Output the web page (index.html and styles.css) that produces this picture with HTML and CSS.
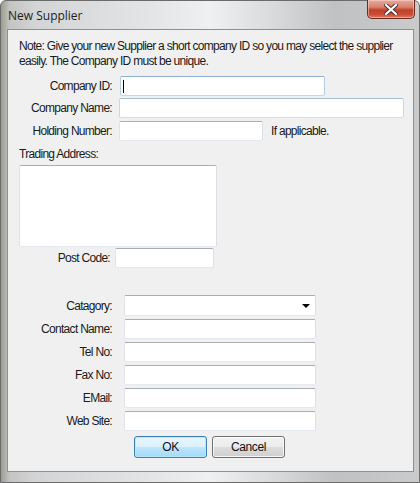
FILE: index.html
```html
<!DOCTYPE html>
<html lang="en">
<head>
  <meta charset="UTF-8" />
  <meta name="viewport" content="width=device-width, initial-scale=1.0" />
  <title>New Supplier</title>
  <link rel="stylesheet" href="styles.css">
</head>
<body>
  <div class="window">
    <div class="titlebar">
      <span class="title">New Supplier</span>
      <button class="close-button" type="button" aria-label="Close">
        <svg width="14" height="11" viewBox="0 0 14 11">
          <path d="M2 1 L12 10 M12 1 L2 10" stroke="#4a2a24" stroke-width="4" stroke-linecap="square" />
          <path d="M2 1 L12 10 M12 1 L2 10" stroke="#ffffff" stroke-width="2.2" stroke-linecap="square" />
        </svg>
      </button>
    </div>

    <form class="client" id="supplierForm">
      <p class="note">
        Note: Give your new Supplier a short company ID so you may select the supplier
        easily. The Company ID must be unique.
      </p>

      <div class="group group-top">
        <div class="row">
          <label class="label" for="company_id">Company ID:</label>
          <div class="caret-wrap">
            <input class="field field-id" type="text" id="company_id" name="company_id" />
            <span class="caret"></span>
          </div>
        </div>
        <div class="row">
          <label class="label" for="company_name">Company Name:</label>
          <input class="field field-name" type="text" id="company_name" name="company_name" />
        </div>
        <div class="row">
          <label class="label" for="holding_number">Holding Number:</label>
          <input class="field field-holding" type="text" id="holding_number" name="holding_number" />
          <span class="hint">If applicable.</span>
        </div>
      </div>

      <div class="address">
        <label class="address-label" for="trading_address">Trading Address:</label>
        <textarea class="field address-box" id="trading_address" name="trading_address"></textarea>
        <div class="row row-post">
          <label class="label" for="post_code">Post Code:</label>
          <input class="field field-post" type="text" id="post_code" name="post_code" />
        </div>
      </div>

      <div class="group group-bottom">
        <div class="row row-select">
          <label class="label">Catagory:</label>
          <div class="field select-box"><span class="arrow"></span></div>
        </div>
        <div class="row">
          <label class="label" for="contact_name">Contact Name:</label>
          <input class="field field-wide" type="text" id="contact_name" name="contact_name" />
        </div>
        <div class="row">
          <label class="label" for="tel_no">Tel No:</label>
          <input class="field field-wide" type="text" id="tel_no" name="tel_no" />
        </div>
        <div class="row">
          <label class="label" for="fax_no">Fax No:</label>
          <input class="field field-wide" type="text" id="fax_no" name="fax_no" />
        </div>
        <div class="row">
          <label class="label" for="email">EMail:</label>
          <input class="field field-wide" type="text" id="email" name="email" />
        </div>
        <div class="row">
          <label class="label" for="web_site">Web Site:</label>
          <input class="field field-wide" type="text" id="web_site" name="web_site" />
        </div>
      </div>

      <div class="buttons">
        <button class="btn btn-default" type="submit">OK</button>
        <button class="btn" type="button">Cancel</button>
      </div>
    </form>
  </div>
</body>
</html>
```

FILE: styles.css
```css
* {
  box-sizing: border-box;
}

body {
  margin: 0;
  padding: 0;
  background-color: #ffffff;
}

.window {
  width: 420px;
  height: 483px;
  border: 1px solid #6b6b6b;
  border-radius: 6px 6px 0 0;
  background: linear-gradient(90deg, #9c9c92 0, #c4c4c0 2%, #d2d4d6 8%, #e2e4e6 35%, #eef0f1 50%, #d8dadc 65%, #bfc1c3 80%, #c9cbcd 100%);
  display: flex;
  flex-direction: column;
}

.titlebar {
  height: 28px;
  display: flex;
  justify-content: space-between;
  align-items: flex-start;
}

.title {
  font-family: 'Open Sans', 'Noto Sans', sans-serif;
  font-size: 12px;
  color: #1e1e1e;
  padding: 6px 0 0 7px;
}

.close-button {
  width: 48px;
  height: 19px;
  margin: -1px 4px 0 0;
  padding: 0;
  border: 1px solid #6e2a20;
  border-top: none;
  border-radius: 0 0 5px 5px;
  background: linear-gradient(180deg, #e9a99d 0, #d7806f 40%, #c2412b 55%, #c84d36 80%, #dd7a5e 100%);
  box-shadow: inset 0 0 0 1px rgba(255, 220, 210, 0.5);
  display: flex;
  justify-content: center;
  align-items: center;
}

.client {
  margin: 0 5px 0 6px;
  height: 443px;
  border: 1px solid #8e8f8f;
  background-color: #f0f0f0;
  font-family: 'Liberation Sans', Arial, sans-serif;
  font-size: 12px;
  letter-spacing: -0.7px;
  color: #1a1a1a;
  padding: 0;
}

.note {
  margin: 9px 6px 0 11px;
  line-height: 15px;
}

.group {
  display: flex;
  flex-direction: column;
}

.group-top {
  margin-top: 7px;
  gap: 2px;
}

.group-bottom {
  margin-top: 27px;
  gap: 3px;
}

.row {
  display: flex;
  align-items: center;
}

.label {
  width: 104px;
  text-align: right;
  flex-shrink: 0;
}

.group-top .label {
  margin-right: 7px;
}

.group-bottom .label {
  margin-right: 12px;
}

.field {
  height: 20px;
  border: 1px solid;
  border-color: #abadb3 #dbdfe6 #e3e9ef #e2e3ea;
  border-radius: 2px;
  background-color: #ffffff;
  font-family: inherit;
  font-size: 12px;
  padding: 0 3px;
  margin: 0;
  outline: none;
}

.caret-wrap {
  position: relative;
  margin-left: 1px;
}

.caret {
  position: absolute;
  left: 3px;
  top: 4px;
  width: 1px;
  height: 13px;
  background-color: #000;
}

.field-id {
  width: 205px;
  display: block;
  border-color: #8fb0cf #b5cde3 #c4d7e8 #b5cde3;
}

.field-name {
  width: 285px;
  border-color: #a7bdd0 #c9d8e5 #d3e0ea #c9d8e5;
}

.field-holding {
  width: 144px;
  height: 20px;
  margin-top: 1px;
}

.hint {
  margin-left: 8px;
}

.address {
  margin: 6px 0 0 11px;
  display: flex;
  flex-direction: column;
}

.address-label {
  line-height: 15px;
}

.address-box {
  width: 198px;
  height: 82px;
  margin-top: 3px;
  resize: none;
}

.row-post {
  margin-top: 1px;
}

.row-post .label {
  width: 91px;
  margin-right: 5px;
}

.field-post {
  width: 99px;
}

.select-box {
  width: 192px;
  height: 21px;
  display: flex;
  justify-content: flex-end;
  align-items: center;
  padding-right: 5px;
}

.arrow {
  width: 0;
  height: 0;
  border-left: 4px solid transparent;
  border-right: 4px solid transparent;
  border-top: 4px solid #000;
  margin-top: 1px;
}

.field-wide {
  width: 192px;
}

.buttons {
  margin-top: 5px;
  display: flex;
  justify-content: center;
  gap: 5px;
  padding-right: 2px;
}

.btn {
  width: 73px;
  height: 22px;
  border: 1px solid #707070;
  border-radius: 3px;
  background: linear-gradient(180deg, #f2f2f2 0, #ebebeb 50%, #dddddd 51%, #cfcfcf 100%);
  box-shadow: inset 0 0 0 1px rgba(255, 255, 255, 0.8);
  font-family: 'Liberation Sans', Arial, sans-serif;
  font-size: 12px;
  letter-spacing: -0.4px;
  color: #111;
  padding: 0;
}

.btn-default {
  border-color: #3c7fb1;
  background: linear-gradient(180deg, #eaf6fd 0, #d9f0fc 50%, #bee6fd 51%, #a7d9f5 100%);
  box-shadow: inset 0 0 0 1px rgba(180, 230, 255, 0.9);
}
```
